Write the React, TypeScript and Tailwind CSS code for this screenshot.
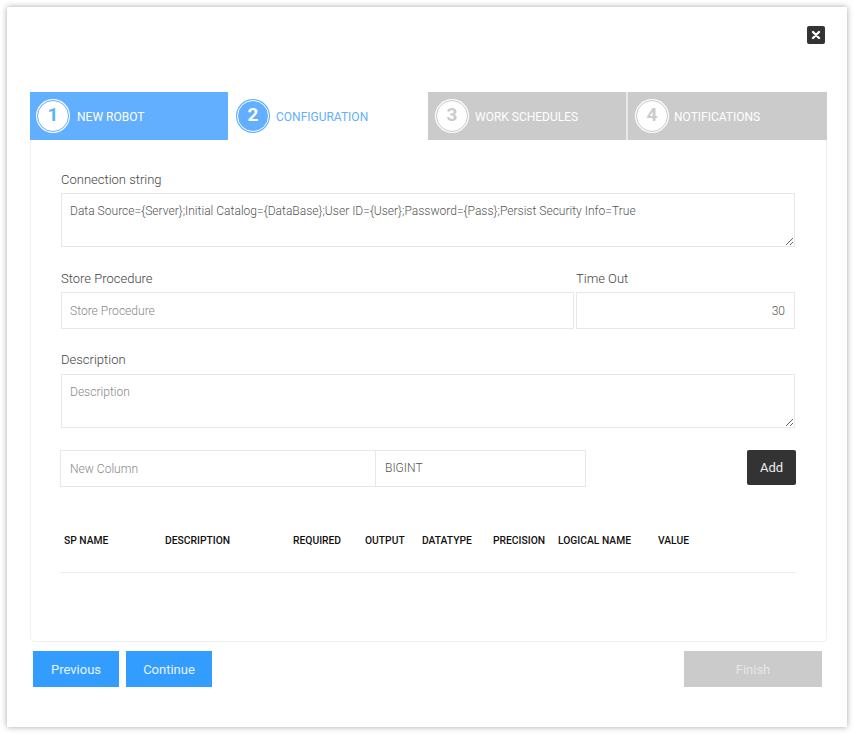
import React from 'react';

const steps = [
  { n: 1, label: 'NEW ROBOT', state: 'done', box: 'w-[198px] pl-[7px] gap-[8px]' },
  { n: 2, label: 'CONFIGURATION', state: 'active', box: 'w-[200px] pl-[9px] gap-[7px]' },
  { n: 3, label: 'WORK SCHEDULES', state: 'todo', box: 'w-[198px] pl-[8px] gap-[7px]' },
  { n: 4, label: 'NOTIFICATIONS', state: 'todo', box: 'w-[199px] pl-[8px] gap-[6px]' },
];

const columns = [
  { label: 'SP NAME', width: 'w-[101px]' },
  { label: 'DESCRIPTION', width: 'w-[128px]' },
  { label: 'REQUIRED', width: 'w-[72px]' },
  { label: 'OUTPUT', width: 'w-[57px]' },
  { label: 'DATATYPE', width: 'w-[71px]' },
  { label: 'PRECISION', width: 'w-[65px]' },
  { label: 'LOGICAL NAME', width: 'w-[100px]' },
  { label: 'VALUE', width: 'w-[60px]' },
];

function Step({ n, label, state, box }: { n: number; label: string; state: string; box: string }) {
  const bg = state === 'done' ? 'bg-[#62afff]' : state === 'active' ? 'bg-white' : 'bg-[#cbcbcb]';
  const text = state === 'active' ? 'text-[#62afff]' : 'text-white';
  const circle =
    state === 'active'
      ? 'bg-[#62afff] text-white border-white ring-[#62afff]'
      : state === 'done'
        ? 'bg-white text-[#62afff] border-[#62afff] ring-white'
        : 'bg-white text-[#cbcbcb] border-[#cbcbcb] ring-white';
  return (
    <div className={`${box} ${bg} h-[48px] flex items-center shrink-0`}>
      <div className={`w-[32px] h-[32px] rounded-full border ring-1 ${circle} flex items-center justify-center text-[19px] font-bold pb-[2px]`}>
        {n}
      </div>
      <span className={`mt-[1px] text-[12px] ${text}`}>{label}</span>
    </div>
  );
}

export default function App() {
  const fieldCls = 'border border-[#e8e8e8] bg-white text-[12.05px] font-light text-[#555] placeholder:text-[#888] outline-none';
  const labelCls = 'block text-[13px] font-light leading-[22px] text-[#444]';

  return (
    <div className="w-[854px] h-[734px] bg-white pt-[7px] pl-[7px] font-['Roboto',sans-serif]">
      <div className="w-[840px] h-[720px] bg-white shadow-[0_0_6px_rgba(0,0,0,0.35)] flex flex-col px-[23px]">
        <div className="h-[85px] shrink-0 flex justify-end pt-[19px] w-[795px]">
          <button className="w-[18px] h-[18px] rounded-[2px] bg-[#333] flex items-center justify-center">
            <svg width="10" height="10" viewBox="0 0 10 10">
              <path d="M2 2 L8 8 M8 2 L2 8" stroke="#fff" strokeWidth="2.4" strokeLinecap="round" />
            </svg>
          </button>
        </div>

        <div className="w-[797px] flex shrink-0">
          {steps.map((s, i) => (
            <React.Fragment key={s.n}>
              {i === 3 && <div className="w-[2px] shrink-0 bg-[#e8e8e8]" />}
              <Step {...s} />
            </React.Fragment>
          ))}
        </div>

        <div className="w-[797px] h-[502px] shrink-0 border border-t-0 border-[#f0f0f0] rounded-b-[5px] pl-[30px] pr-[31px] pt-[29px]">
          <label className={labelCls}>Connection string</label>
          <textarea
            className={`${fieldCls} block w-[734px] h-[54px] mt-[2px] px-[8px] py-[8px] leading-[18px]`}
            defaultValue="Data Source={Server};Initial Catalog={DataBase};User ID={User};Password={Pass};Persist Security Info=True"
          />

          <div className="flex mt-[21px]">
            <div className="w-[515px]">
              <label className={labelCls}>Store Procedure</label>
              <input className={`${fieldCls} block w-[513px] h-[37px] mt-[2px] px-[8px]`} placeholder="Store Procedure" />
            </div>
            <div className="w-[219px]">
              <label className={labelCls}>Time Out</label>
              <input className={`${fieldCls} block w-[219px] h-[37px] mt-[2px] px-[9px] text-right`} defaultValue="30" />
            </div>
          </div>

          <label className={`${labelCls} mt-[20px]`}>Description</label>
          <textarea
            className={`${fieldCls} block w-[734px] h-[54px] mt-[3px] px-[8px] py-[8px] leading-[18px]`}
            placeholder="Description"
          />

          <div className="flex items-start mt-[22px] -ml-[1px] w-[736px]">
            <input className={`${fieldCls} w-[316px] h-[37px] px-[9px]`} placeholder="New Column" />
            <div className={`${fieldCls} w-[211px] h-[37px] -ml-[1px] px-[9px] flex items-center`}>BIGINT</div>
            <button className="ml-auto w-[49px] h-[35px] pt-[1px] rounded-[2px] bg-[#333] text-[#eee] text-[13px]">Add</button>
          </div>

          <div className="w-[736px] -ml-[1px] h-[86px] border-b border-[#eeeef4] flex items-center pl-[4px] pt-[23px]">
            {columns.map(c => (
              <div key={c.label} className={`${c.width} shrink-0 text-[10.3px] font-medium text-[#111] whitespace-nowrap`}>
                {c.label}
              </div>
            ))}
          </div>
        </div>

        <div className="w-[797px] flex items-start mt-[9px] px-[3px]">
          <button className="w-[86px] h-[36px] pt-[1px] bg-[#339cff] text-[#e8f3ff] text-[13px]">Previous</button>
          <button className="w-[86px] h-[36px] pt-[1px] ml-[7px] bg-[#339cff] text-[#e8f3ff] text-[13px]">Continue</button>
          <button className="w-[138px] h-[36px] pt-[1px] ml-auto mr-[2px] bg-[#cbcbcb] text-[#e6e6e6] text-[13px]">Finish</button>
        </div>
      </div>
    </div>
  );
}
